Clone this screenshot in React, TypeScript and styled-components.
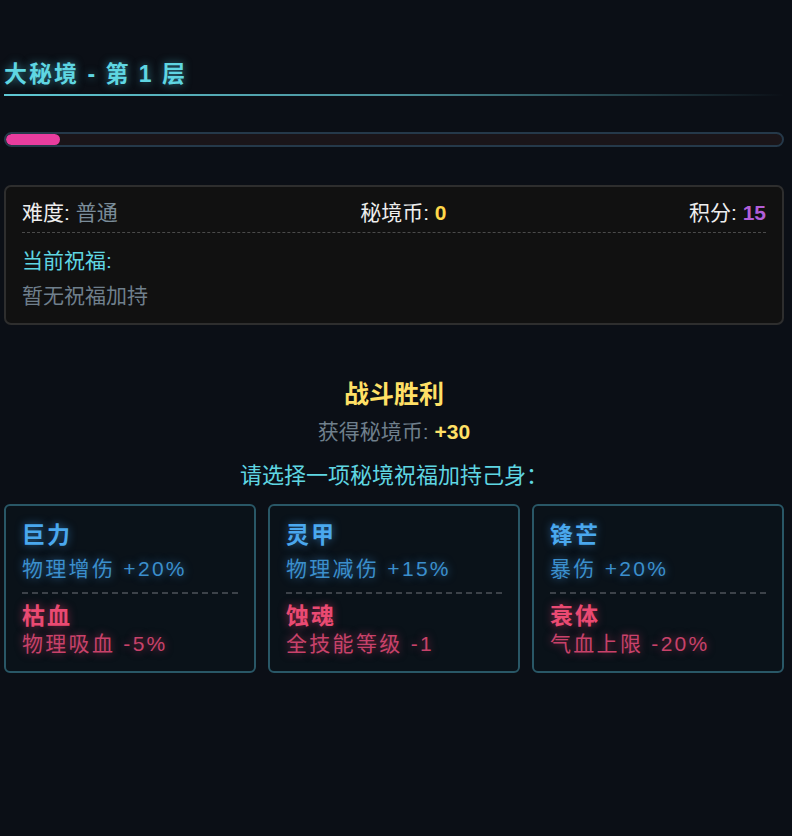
import React from "react";
import styled, { createGlobalStyle } from "styled-components";

const Global = createGlobalStyle`
  html, body { margin: 0; padding: 0; background: #0b0f16; }
  body { font-family: "Liberation Sans", "Noto Sans CJK SC", sans-serif; }
`;

const Page = styled.div`
  min-height: 836px;
  background: #0b0f16;
  padding: 56px 8px 0 4px;
  box-sizing: border-box;
  display: flex;
  flex-direction: column;
`;

const Title = styled.h1`
  margin: 0;
  font-size: 23px;
  line-height: 36px;
  font-weight: 700;
  letter-spacing: 2px;
  color: #5fd6e2;
  text-shadow: 0 0 8px rgba(80, 210, 230, 0.55);
  &::after {
    content: "";
    display: block;
    height: 2px;
    margin-top: 2px;
    background: linear-gradient(90deg, #5fc8d4 0%, #4a8f99 50%, rgba(60, 100, 110, 0) 100%);
  }
`;

const Progress = styled.div`
  margin-top: 36px;
  height: 15px;
  border: 2px solid #25394a;
  border-radius: 9px;
  background: #1a1519;
  box-sizing: border-box;
  overflow: hidden;
`;

const Fill = styled.div`
  height: 100%;
  background: #e83d9e;
  border-radius: 8px;
`;

const Panel = styled.section`
  margin-top: 38px;
  background: #111111;
  border: 2px solid #2e2e2e;
  border-radius: 7px;
  padding: 11px 16px 12px;
  display: flex;
  flex-direction: column;
`;

const StatRow = styled.div`
  display: flex;
  justify-content: space-between;
  align-items: center;
  font-size: 21px;
  line-height: 30px;
  padding-bottom: 4px;
  border-bottom: 1px dashed #4a4a4a;
`;

const Stat = styled.span`
  color: #eeeeee;
`;

const Val = styled.span<{ $c: string; $bold?: boolean }>`
  color: ${(p) => p.$c};
  font-weight: ${(p) => (p.$bold ? 700 : 400)};
`;

const SubTitle = styled.div`
  margin-top: 13px;
  font-size: 21px;
  line-height: 30px;
  color: #5fd6e2;
`;

const Empty = styled.div`
  margin-top: 5px;
  font-size: 21px;
  line-height: 30px;
  color: #6f7f8c;
`;

const Victory = styled.div`
  margin-top: 51px;
  display: flex;
  flex-direction: column;
  align-items: center;
`;

const VTitle = styled.div`
  font-size: 25px;
  font-weight: 700;
  line-height: 36px;
  color: #ffe066;
`;

const Reward = styled.div`
  margin-top: 5px;
  font-size: 21px;
  line-height: 30px;
  color: #6f7f8c;
`;

const Prompt = styled.div`
  margin-top: 14px;
  font-size: 22px;
  line-height: 30px;
  color: #5fd6e2;
`;

const Cards = styled.div`
  margin-top: 13px;
  display: grid;
  grid-template-columns: repeat(3, 1fr);
  gap: 12px;
`;

const Card = styled.div`
  background: #0a1219;
  border: 2px solid #295766;
  border-radius: 6px;
  padding: 15px 16px 13px;
  display: flex;
  flex-direction: column;
`;

const Name = styled.div<{ $c: string; $g: string }>`
  font-size: 23px;
  font-weight: 700;
  line-height: 28px;
  letter-spacing: 2px;
  color: ${(p) => p.$c};
  text-shadow: 0 0 8px ${(p) => p.$g};
`;

const Effect = styled.div<{ $c: string; $g: string; $top?: number }>`
  margin-top: ${(p) => p.$top ?? 0}px;
  font-size: 21px;
  line-height: 28px;
  letter-spacing: 2.3px;
  color: ${(p) => p.$c};
  text-shadow: 0 0 8px ${(p) => p.$g};
`;

const Divider = styled.div`
  margin: 9px 0 8px;
  border-top: 2px dashed #3c4249;
`;

const blessings = [
  { n: "巨力", e: "物理增伤 +20%", cn: "枯血", ce: "物理吸血 -5%" },
  { n: "灵甲", e: "物理减伤 +15%", cn: "蚀魂", ce: "全技能等级 -1" },
  { n: "锋芒", e: "暴伤 +20%", cn: "衰体", ce: "气血上限 -20%" },
];

const BLUE = "#4aa8ee";
const BLUE_D = "#3b8fcc";
const BLUE_G = "rgba(60,150,230,0.6)";
const RED = "#ea4a72";
const RED_D = "#c8426a";
const RED_G = "rgba(230,60,110,0.55)";

export default function App() {
  return (
    <Page>
      <Global />
      <Title>大秘境 - 第 1 层</Title>
      <Progress>
        <Fill style={{ width: "7%" }} />
      </Progress>
      <Panel>
        <StatRow>
          <Stat>
            难度: <Val $c="#7a8c99">普通</Val>
          </Stat>
          <Stat>
            秘境币: <Val $c="#ffd84a" $bold>0</Val>
          </Stat>
          <Stat>
            积分: <Val $c="#b25fd8" $bold>15</Val>
          </Stat>
        </StatRow>
        <SubTitle>当前祝福:</SubTitle>
        <Empty>暂无祝福加持</Empty>
      </Panel>
      <Victory>
        <VTitle>战斗胜利</VTitle>
        <Reward>
          获得秘境币: <Val $c="#ffe066" $bold>+30</Val>
        </Reward>
        <Prompt>请选择一项秘境祝福加持己身：</Prompt>
      </Victory>
      <Cards>
        {blessings.map((b) => (
          <Card key={b.n}>
            <Name $c={BLUE} $g={BLUE_G}>{b.n}</Name>
            <Effect $c={BLUE_D} $g={BLUE_G} $top={6}>{b.e}</Effect>
            <Divider />
            <Name $c={RED} $g={RED_G}>{b.cn}</Name>
            <Effect $c={RED_D} $g={RED_G}>{b.ce}</Effect>
          </Card>
        ))}
      </Cards>
    </Page>
  );
}
